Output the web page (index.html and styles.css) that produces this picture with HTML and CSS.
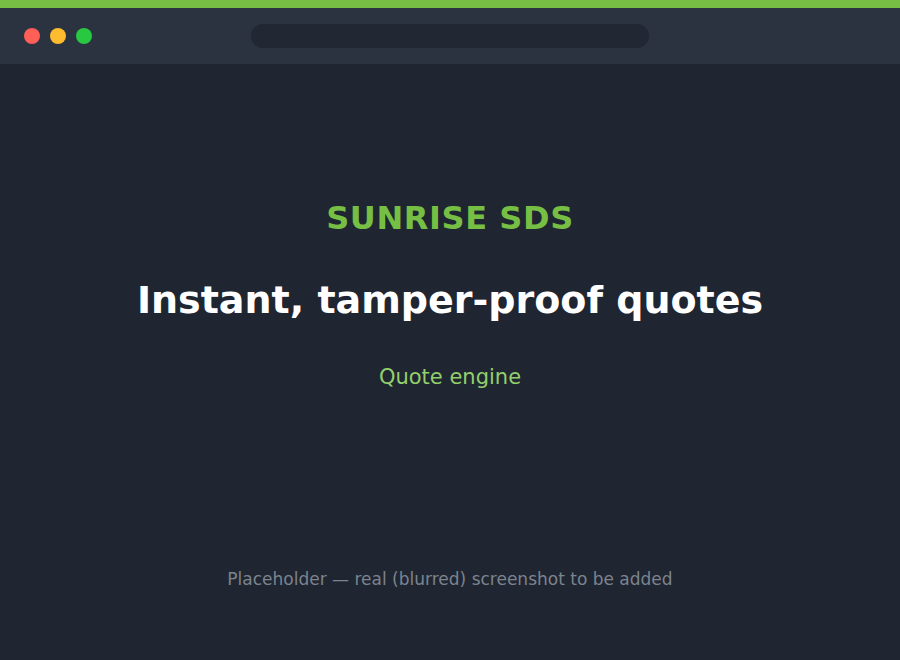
FILE: index.html
```html
<!DOCTYPE html>
<html lang="en">

<head>
    <meta charset="UTF-8" />
    <meta name="viewport" content="width=device-width, initial-scale=1.0" />
    <title>Sunrise SDS - Quote engine</title>
    <link rel="stylesheet" href="styles.css">
</head>

<body>
    <div class="window">
        <!-- Fake browser chrome -->
        <div class="titlebar">
            <div class="dots">
                <span class="dot red"></span>
                <span class="dot yellow"></span>
                <span class="dot green"></span>
            </div>
            <div class="address"></div>
        </div>

        <div class="screen">
            <div class="hero">
                <p class="brand">SUNRISE SDS</p>
                <h1>Instant, tamper-proof quotes</h1>
                <p class="tag">Quote engine</p>
            </div>
            <p class="note">Placeholder — real (blurred) screenshot to be added</p>
        </div>
    </div>
</body>

</html>
```

FILE: styles.css
```css
body {
    margin: 0;
    font-family: "DejaVu Sans", sans-serif;
    background-color: #1f2631;
}

.window {
    height: 660px;
    display: flex;
    flex-direction: column;
    border-top: 8px solid #76bf44;
    box-sizing: border-box;
}

.titlebar {
    height: 56px;
    background-color: #2b3240;
    display: flex;
    align-items: center;
    padding: 0 24px;
}

.dots {
    display: flex;
    gap: 10px;
}

.dot {
    width: 16px;
    height: 16px;
    border-radius: 50%;
}

.dot.red {
    background-color: #fe5f57;
}

.dot.yellow {
    background-color: #febc2e;
}

.dot.green {
    background-color: #28c840;
}

.address {
    width: 398px;
    height: 24px;
    margin-left: 159px;
    border-radius: 12px;
    background-color: #212833;
}

.screen {
    flex: 1;
    display: flex;
    flex-direction: column;
    align-items: center;
    text-align: center;
}

.hero {
    padding-top: 135px;
}

.brand {
    margin: 0;
    font-size: 32px;
    font-weight: bold;
    letter-spacing: 0.6px;
    color: #76bf44;
}

h1 {
    margin: 41px 0 0;
    font-size: 38px;
    font-weight: bold;
    color: #ffffff;
}

.tag {
    margin: 43px 0 0;
    font-size: 21px;
    color: #93cf6c;
}

.note {
    margin: 180px 0 0;
    font-size: 17px;
    color: #7c838e;
}
```
